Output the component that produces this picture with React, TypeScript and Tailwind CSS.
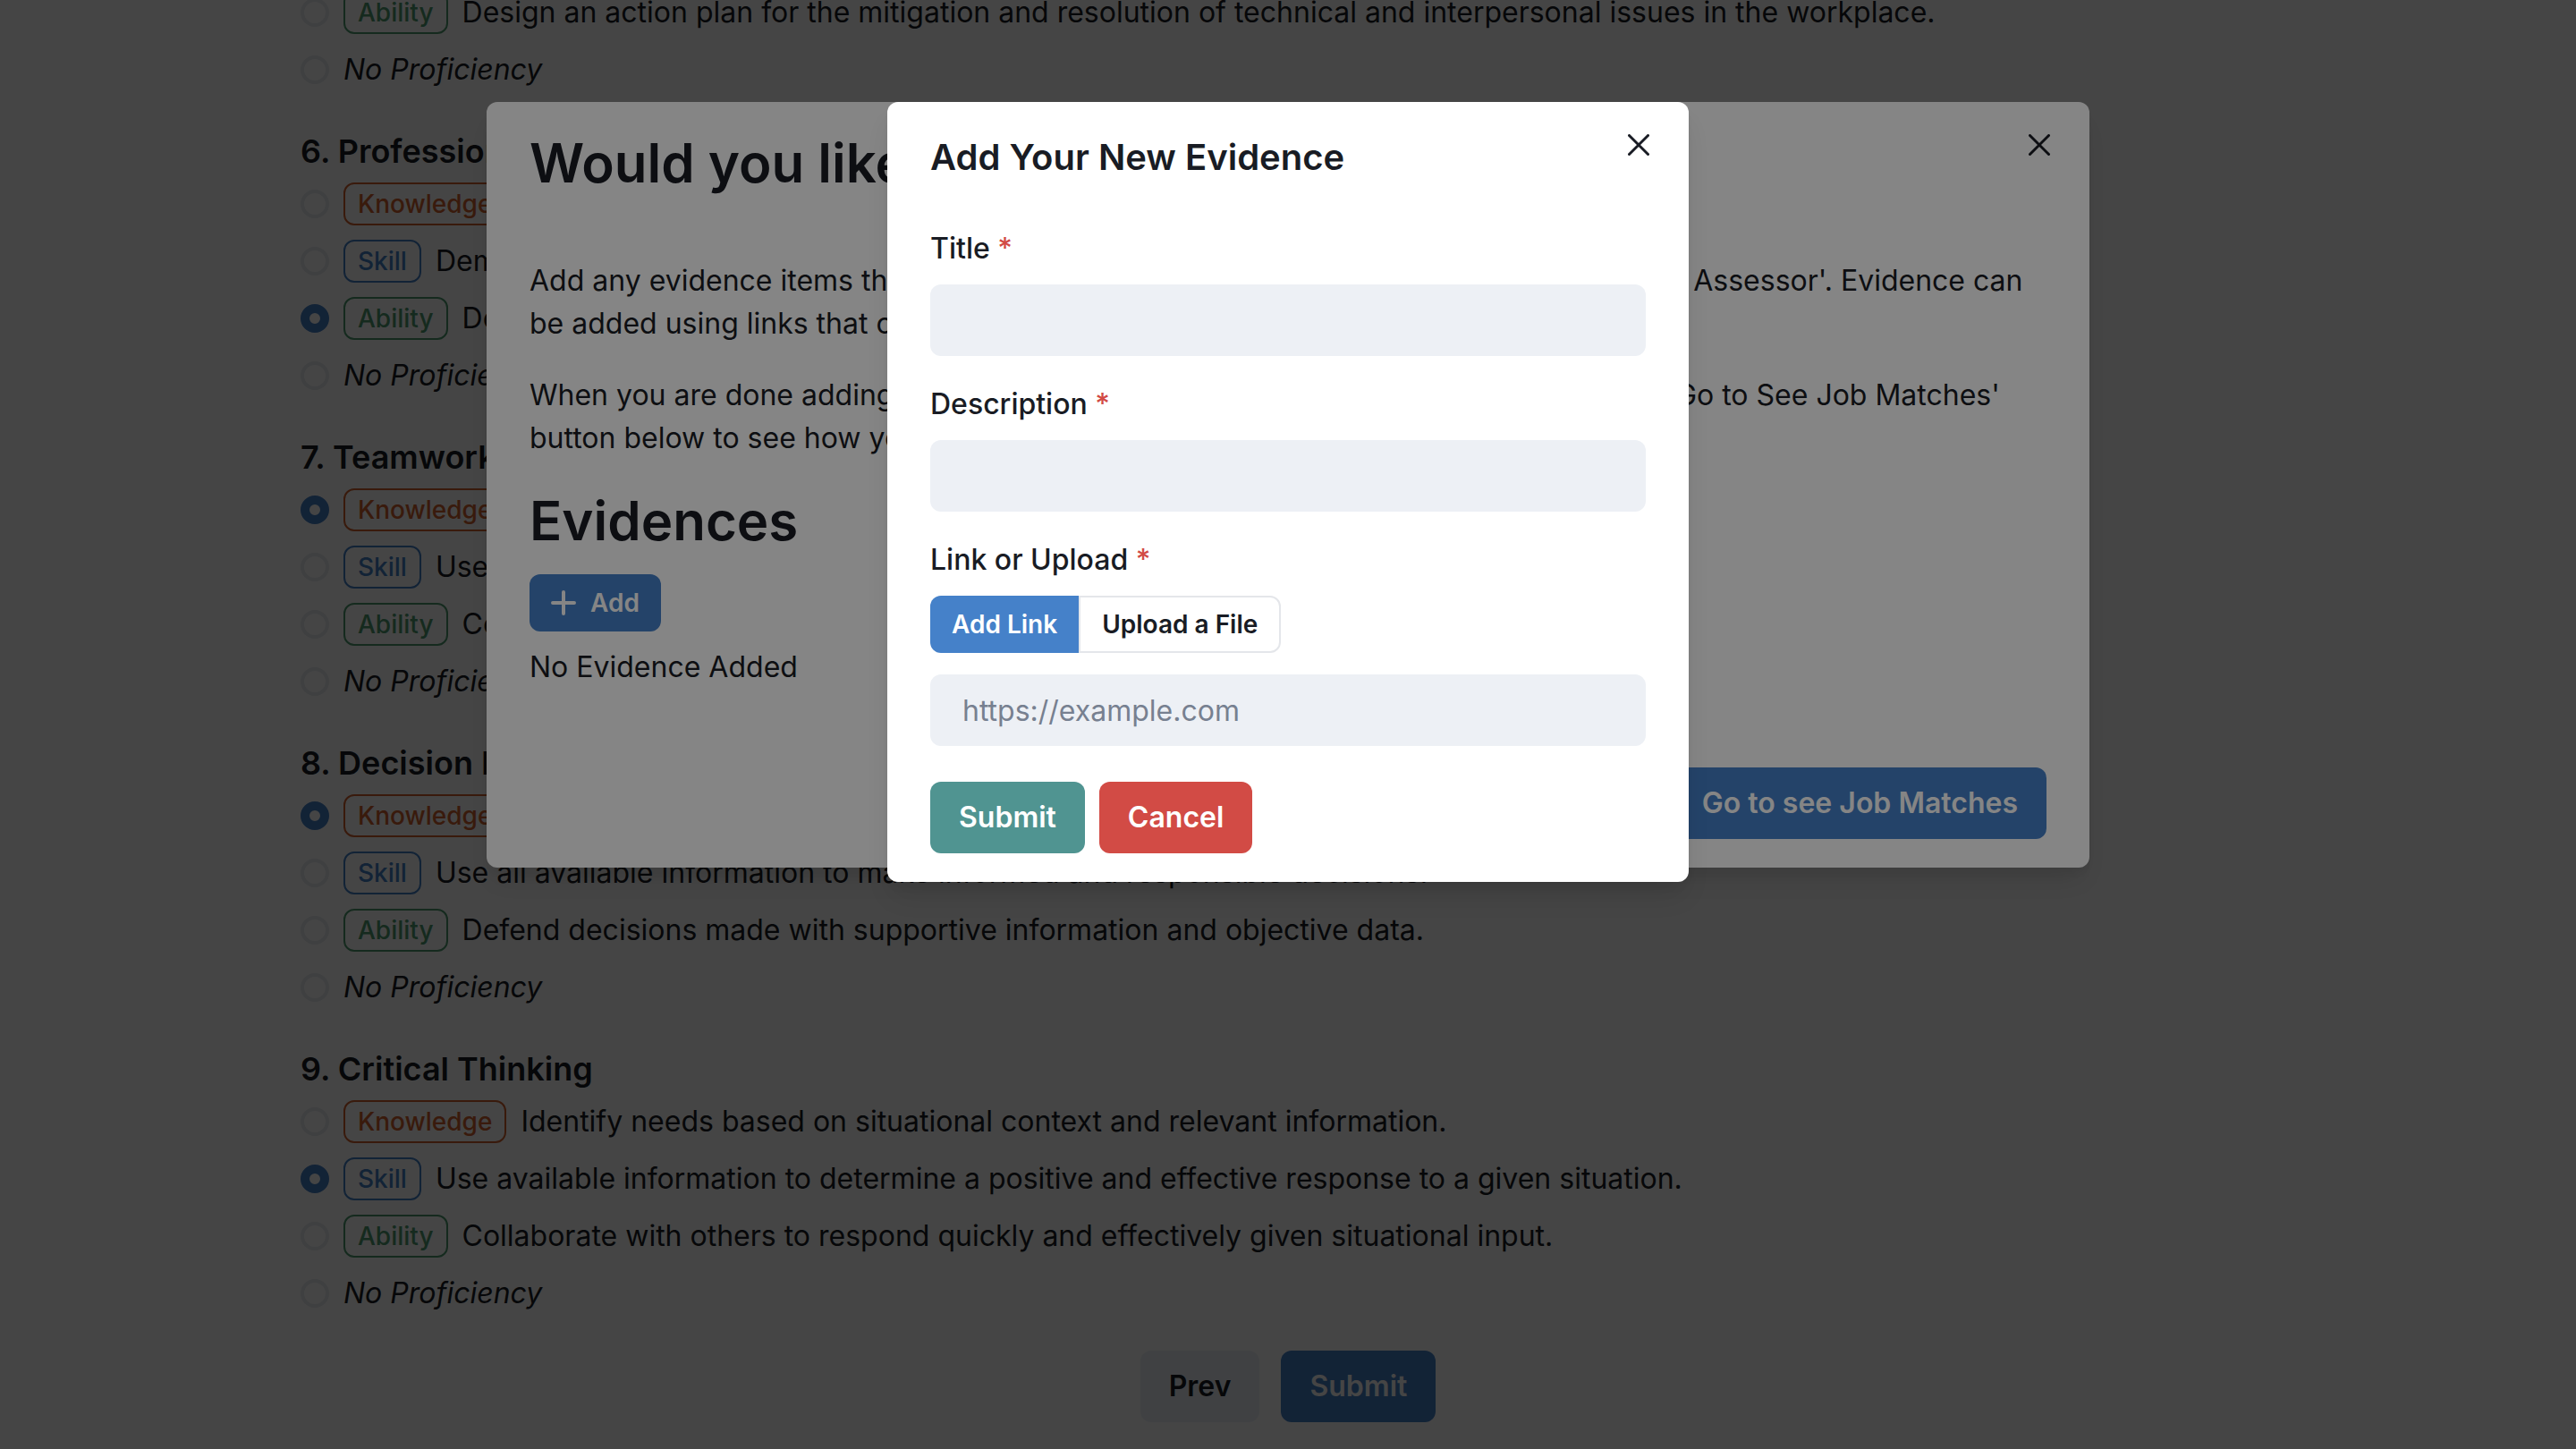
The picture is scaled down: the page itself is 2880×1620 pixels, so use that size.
import React from "react";

type Kind = "Knowledge" | "Skill" | "Ability";
type Option = { kind: Kind | null; text: string };
type Group = { id: number; title?: string; picked?: number; options: Option[] };

const none: Option = { kind: null, text: "No Proficiency" };

const groups: Group[] = [
  {
    id: 5,
    options: [
      {
        kind: "Ability",
        text: "Design an action plan for the mitigation and resolution of technical and interpersonal issues in the workplace.",
      },
      none,
    ],
  },
  {
    id: 6,
    title: "Professionalism",
    picked: 2,
    options: [
      { kind: "Knowledge", text: "Identify professional conduct." },
      { kind: "Skill", text: "Demonstrate professional conduct." },
      { kind: "Ability", text: "Develop professional conduct in others." },
      none,
    ],
  },
  {
    id: 7,
    title: "Teamwork",
    picked: 0,
    options: [
      { kind: "Knowledge", text: "Identify the roles of a team." },
      { kind: "Skill", text: "Use teamwork to meet a shared goal." },
      { kind: "Ability", text: "Collaborate with others as a team." },
      none,
    ],
  },
  {
    id: 8,
    title: "Decision Making",
    picked: 0,
    options: [
      { kind: "Knowledge", text: "Identify the steps of a decision." },
      { kind: "Skill", text: "Use all available information to make informed and responsible decisions." },
      { kind: "Ability", text: "Defend decisions made with supportive information and objective data." },
      none,
    ],
  },
  {
    id: 9,
    title: "Critical Thinking",
    picked: 1,
    options: [
      { kind: "Knowledge", text: "Identify needs based on situational context and relevant information." },
      {
        kind: "Skill",
        text: "Use available information to determine a positive and effective response to a given situation.",
      },
      {
        kind: "Ability",
        text: "Collaborate with others to respond quickly and effectively given situational input.",
      },
      none,
    ],
  },
];

const tagStyle: Record<Kind, string> = {
  Knowledge: "border-[#d2632f] text-[#d2632f]",
  Skill: "border-[#4581c9] text-[#4581c9]",
  Ability: "border-[#4f9d72] text-[#4f9d72]",
};

function OptionRow({ group, option, index }: { group: Group; option: Option; index: number }) {
  return (
    <label className="flex h-12 items-center gap-4 whitespace-nowrap">
      <input
        type="radio"
        name={`group-${group.id}`}
        defaultChecked={group.picked === index}
        className="size-8 shrink-0 appearance-none rounded-full border-4 border-[#e8ebef] bg-white checked:border-[10px] checked:border-[#4581c9]"
      />
      {option.kind ? (
        <>
          <span
            className={`flex h-12 items-center rounded-xl border-2 px-[14px] text-[28px] leading-8 font-medium ${tagStyle[option.kind]}`}
          >
            {option.kind}
          </span>
          <span>{option.text}</span>
        </>
      ) : (
        <span className="italic">{option.text}</span>
      )}
    </label>
  );
}

function CloseButton() {
  return (
    <button
      type="button"
      aria-label="Close"
      className="absolute top-4 right-6 flex size-16 items-center justify-center rounded-xl"
    >
      <svg viewBox="0 0 24 24" className="size-6" fill="none" stroke="currentColor" strokeWidth="3" strokeLinecap="round">
        <path d="M1.5 1.5 22.5 22.5M22.5 1.5 1.5 22.5" />
      </svg>
    </button>
  );
}

function Field({ id, label }: { id: string; label: string }) {
  return (
    <div className="flex flex-col gap-4">
      <label htmlFor={id} className="font-medium">
        {label} <span className="text-[#d24b45]">*</span>
      </label>
      <input id={id} type="text" className="h-20 w-full rounded-xl bg-[#edf0f5] px-9" />
    </div>
  );
}

const shadow =
  "shadow-[0_20px_30px_-6px_rgba(0,0,0,0.1),0_8px_12px_-4px_rgba(0,0,0,0.05)]";

export default function App() {
  return (
    <div className="relative h-screen overflow-hidden bg-white font-['Inter',sans-serif] text-[32px] leading-[48px] text-[#191c24] [font-optical-sizing:none]">
      <main className="flex h-full flex-col justify-end gap-10 px-[336px] pb-[30px]">
        {groups.map((group) => (
          <section key={group.id} className="flex flex-col gap-2">
            {group.title && (
              <h3 className="text-[36px] leading-[54px] font-semibold">
                {group.id}. {group.title}
              </h3>
            )}
            <div className="flex flex-col gap-4">
              {group.options.map((option, index) => (
                <OptionRow key={index} group={group} option={option} index={index} />
              ))}
            </div>
          </section>
        ))}
        <div className="flex justify-center gap-6">
          <button type="button" className="h-20 rounded-xl bg-[#edf2f7] px-8 font-semibold">
            Prev
          </button>
          <button type="button" className="h-20 rounded-xl bg-[#4581c9] px-8 font-semibold text-white">
            Submit
          </button>
        </div>
      </main>

      <div className="absolute inset-0 flex items-start justify-center bg-black/48 pt-[114px]">
        <div role="dialog" aria-label="Add evidence" className={`relative w-full max-w-[1792px] rounded-xl bg-white px-12 py-8 ${shadow}`}>
          <CloseButton />
          <h2 className="text-[60px] leading-[72px] font-semibold">Would you like to add evidence?</h2>
          <div className="mt-[72px] flex flex-col gap-8">
            <p>
              Add any evidence items that support the proficiency you set in the 'Employability Skill Assessor'. Evidence can
              <br />
              be added using links that open your work.
            </p>
            <p>
              When you are done adding all of your supporting evidence pieces, then click on the 'Go to See Job Matches'
              <br />
              button below to see how you match.
            </p>
            <h2 className="text-[60px] leading-[72px] font-semibold">Evidences</h2>
          </div>
          <button
            type="button"
            className="mt-6 flex h-16 items-center gap-4 rounded-xl bg-[#4581c9] px-6 text-[28px] font-semibold text-white"
          >
            <svg viewBox="0 0 28 28" className="size-7" fill="none" stroke="currentColor" strokeWidth="4" strokeLinecap="round">
              <path d="M14 2V26M2 14H26" />
            </svg>
            Add
          </button>
          <p className="mt-4">No Evidence Added</p>
          <div className="mt-[88px] flex justify-end">
            <button type="button" className="h-20 rounded-xl bg-[#4581c9] px-8 font-semibold text-white">
              Go to see Job Matches
            </button>
          </div>
        </div>
      </div>

      <div className="absolute inset-0 flex items-start justify-center bg-black/48 pt-[114px]">
        <div role="dialog" aria-labelledby="new-evidence" className={`relative w-full max-w-[896px] rounded-xl bg-white px-12 py-8 ${shadow}`}>
          <CloseButton />
          <h2 id="new-evidence" className="text-[40px] leading-[60px] font-semibold">
            Add Your New Evidence
          </h2>
          <form className="mt-12 flex flex-col gap-[30px]">
            <Field id="title" label="Title" />
            <Field id="description" label="Description" />
            <div className="flex flex-col">
              <label htmlFor="link" className="font-medium">
                Link or Upload <span className="text-[#d24b45]">*</span>
              </label>
              <div className="mt-4 flex text-[28px] font-semibold">
                <button type="button" className="h-16 rounded-l-xl bg-[#4581c9] px-6 text-white">
                  Add Link
                </button>
                <button type="button" className="h-16 rounded-r-xl border-2 border-[#e4e6ea] px-6">
                  Upload a File
                </button>
              </div>
              <input
                id="link"
                type="url"
                placeholder="https://example.com"
                className="mt-6 h-20 w-full rounded-xl bg-[#edf0f5] px-9 placeholder:text-[#778090]"
              />
              <div className="mt-10 flex gap-4 font-semibold text-white">
                <button type="submit" className="h-20 rounded-xl bg-[#509491] px-8">
                  Submit
                </button>
                <button type="button" className="h-20 rounded-xl bg-[#d24b45] px-8">
                  Cancel
                </button>
              </div>
            </div>
          </form>
        </div>
      </div>
    </div>
  );
}
